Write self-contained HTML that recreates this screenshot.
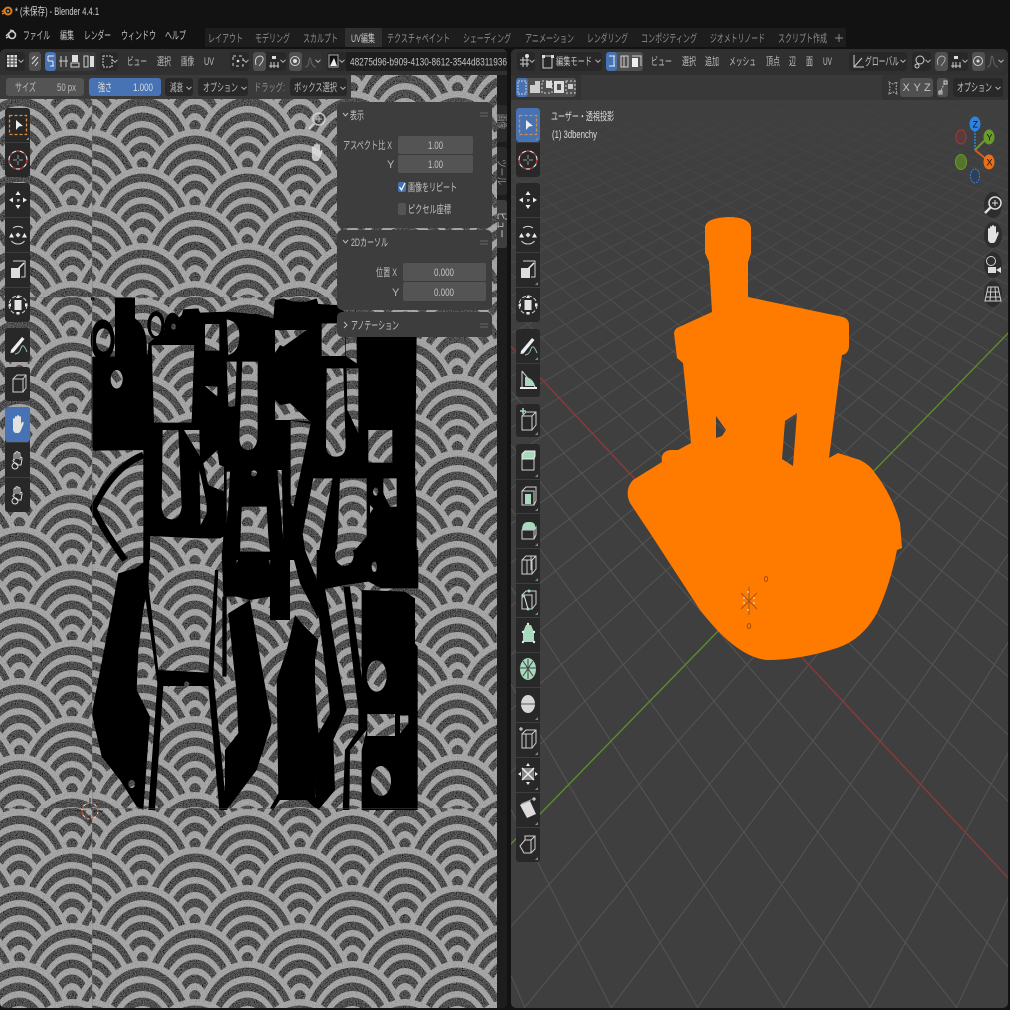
<!DOCTYPE html>
<html><head><meta charset="utf-8"><title>Blender</title>
<style>
html,body{margin:0;padding:0;background:#121212;width:1010px;height:1010px;overflow:hidden}
svg{display:block;overflow:hidden}
text{font-family:"Liberation Sans","Noto Sans CJK JP",sans-serif;font-size:11px;fill:#c4c4c4}
.t{fill:#8c8c8c}
.h{fill:#bcbcbc}
.s{fill:none;stroke:#d0d0d0;stroke-width:1}
</style></head><body>
<svg width="1010" height="1010" viewBox="0 0 1010 1010">
<defs>
<g id="sc">
<ellipse cx="0" cy="78" rx="56" ry="78" fill="#a4a4a4"/>
<ellipse cx="0" cy="78" rx="51" ry="71.500" fill="#505050"/>
<ellipse cx="0" cy="78" rx="45" ry="63" fill="#a4a4a4"/>
<ellipse cx="0" cy="78" rx="40" ry="56.500" fill="#505050"/>
<ellipse cx="0" cy="78" rx="34" ry="48" fill="#a4a4a4"/>
<ellipse cx="0" cy="78" rx="29" ry="41.500" fill="#505050"/>
<ellipse cx="0" cy="78" rx="23" ry="33" fill="#a4a4a4"/>
<ellipse cx="0" cy="78" rx="18" ry="26.500" fill="#505050"/>
<ellipse cx="0" cy="78" rx="12" ry="18" fill="#a4a4a4"/>
<ellipse cx="0" cy="78" rx="7" ry="11" fill="#505050"/>
</g>
<g id="r0"><use href="#sc" x="0"/><use href="#sc" x="105"/></g>
<g id="r1"><use href="#sc" x="-52.5"/><use href="#sc" x="52.5"/><use href="#sc" x="157.5"/></g>
<pattern id="p1" patternUnits="userSpaceOnUse" width="105" height="76" x="90" y="11">
<rect width="105" height="76" fill="#505050"/>
<use href="#r0" y="-152"/><use href="#r1" y="-114"/><use href="#r0" y="-76"/><use href="#r1" y="-38"/><use href="#r0" y="0"/><use href="#r1" y="38"/><use href="#r0" y="76"/>
</pattern>
<pattern id="p2" href="#p1" x="90" y="32"/>
<pattern id="p3" href="#p1" x="90" y="53"/>
<pattern id="q1" href="#p1" x="72" y="11"/>
<pattern id="q2" href="#p1" x="72" y="32"/>
<pattern id="q3" href="#p1" x="72" y="53"/>
<filter id="noise" x="0" y="0" width="1" height="1" filterUnits="objectBoundingBox">
<feTurbulence type="fractalNoise" baseFrequency="0.85" numOctaves="2" seed="4" result="n"/>
<feColorMatrix in="n" type="matrix" values="1 0 0 0 0 1 0 0 0 0 1 0 0 0 0 0 0 0 0 1" result="g"/>
<feComposite in="SourceGraphic" in2="g" operator="arithmetic" k1="0" k2="1" k3="0.3" k4="-0.15"/>
</filter>
<mask id="isl" maskUnits="userSpaceOnUse" x="0" y="0" width="510" height="1010">
<rect width="510" height="1010" fill="#000"/>
<g transform="translate(80,290) scale(.33333)">
<g fill="#fff">
<path d="M35,200 L105,200 L105,22 L165,22 L165,85 Q205,110 200,190 L215,210 L215,400 L205,480 L40,482 L35,470 Z"/>
<ellipse cx="68" cy="150" rx="36" ry="62"/>
<ellipse cx="228" cy="105" rx="26" ry="42"/>
<ellipse cx="278" cy="110" rx="25" ry="42"/>
<ellipse cx="38" cy="26" rx="5" ry="6"/>
<path d="M190,495 Q100,530 40,655 Q70,720 135,810" fill="none" stroke="#fff" stroke-width="20"/>
<path d="M205,160 L305,75 L310,58 L355,55 L360,68 L440,65 L530,72 L580,85 L585,30 L610,25 L640,35 L680,35 L710,25 L715,42 L770,45 L830,100 L1010,140 L1005,560 L1010,650 L1010,810 L190,810 L190,480 Z"/>
</g>
<g fill="#000">
<ellipse cx="70" cy="150" rx="22" ry="35"/>
<ellipse cx="110" cy="268" rx="18" ry="28"/>
<ellipse cx="228" cy="108" rx="16" ry="30"/>
<ellipse cx="281" cy="110" rx="7" ry="9"/>
<path d="M215,165 L343,165 L335,398 L222,398 Z"/>
<path d="M375,102 L418,102 L418,182 L375,182 Z"/>
<path d="M440,88 Q480,95 478,140 Q478,185 445,195 Z"/>
<path d="M487,215 L533,215 L533,440 Q530,480 505,480 Q478,480 478,440 Z"/>
<path d="M585,120 L680,120 L610,170 L600,165 L585,190 Z"/>
<path d="M375,288 L412,290 L412,320 Z"/>
<path d="M440,215 L470,215 L465,350 L445,350 Z"/>
<path d="M585,330 L600,345 L630,340 L690,395 L630,390 L585,390 Z"/>
<path d="M248,420 L295,420 L305,650 Q300,688 275,688 Q248,688 245,650 Z"/>
<path d="M312,420 L358,420 L360,500 Z"/>
<path d="M370,520 L412,480 L418,525 L432,530 L432,605 L385,585 Z"/>
<path d="M358,540 L380,640 L380,670 L362,705 Z"/>
<path d="M210,738 L360,745 L420,745 L430,740 L425,810 L210,810 Z"/>
<path d="M440,545 L450,545 L445,650 L440,700 Z"/>
<path d="M592,540 L605,540 L610,750 Z"/>
<path d="M485,650 L560,650 L565,740 L570,785 L480,785 Z"/>
<ellipse cx="522" cy="550" rx="9" ry="9"/>
<path d="M632,392 L692,402 L640,650 L632,640 Z"/>
<path d="M700,565 L758,565 L712,810 L680,810 L668,730 Z"/>
<path d="M780,565 L860,565 L860,740 L825,780 L820,810 L770,810 Z"/>
<path d="M910,565 L950,565 L950,650 L930,650 L910,610 Z"/>
<ellipse cx="887" cy="605" rx="8" ry="12"/>
<path d="M870,645 L880,655 L870,670 Z"/>
<path d="M725,100 L795,100 L795,198 L725,198 Z"/>
<path d="M797,140 L830,140 L830,220 L797,198 Z"/>
<path d="M740,235 L790,235 L797,470 Q795,500 768,500 Q740,500 738,470 Z"/>
<path d="M800,235 L835,235 L835,430 L802,360 Z"/>
<path d="M865,420 L937,420 L937,518 L865,518 Z"/>
</g>
</g>
<g transform="translate(80,550) scale(.33333)">
<g fill="#fff">
<path d="M115,70 L165,55 L195,35 L205,100 L190,180 L175,300 L170,420 L210,500 L190,780 L170,770 L120,690 L65,620 L35,490 L80,260 Z"/>
<path d="M190,0 L210,0 L205,100 L235,360 L385,368 L405,60 L415,60 L400,375 L440,780 L418,780 L385,408 L250,408 L225,780 L205,780 L232,400 L190,100 Z"/>
<path d="M425,0 L470,0 L470,40 L480,10 L560,10 L570,45 L575,0 L630,0 L630,210 L570,210 L570,140 L510,150 L470,140 L430,140 Z"/>
<path d="M427,140 L440,140 L440,380 L427,380 Z"/>
<path d="M445,190 L510,150 L575,520 L530,660 L440,780 L420,780 L435,720 L435,600 L475,550 L470,430 Z"/>
<path d="M645,195 L665,220 L715,270 L705,330 L705,400 L715,550 L705,740 L720,780 L700,770 L680,750 L600,750 L580,780 L570,775 L595,730 L590,390 L620,300 Z"/>
<path d="M635,0 L675,0 L715,100 L715,205 L660,100 Z"/>
<path d="M715,100 L735,115 L775,350 L800,480 L760,570 L765,720 L715,780 L705,770 L710,560 L750,490 L745,430 L710,150 Z"/>
<path d="M790,110 L810,110 L845,380 L865,490 L860,540 L810,600 L808,780 L788,780 L795,600 L835,540 L835,480 Z"/>
<path d="M845,120 L975,125 L1005,145 L1005,280 L1013,290 L1013,780 L845,780 L845,600 L860,540 L845,400 Z"/>
<path d="M710,0 L1015,0 L1015,115 L905,115 L865,95 L795,105 L730,118 L710,110 Z"/>
</g>
<g fill="#000">
<ellipse cx="155" cy="702" rx="10" ry="12"/>
<ellipse cx="793" cy="15" rx="28" ry="33"/>
<ellipse cx="883" cy="50" rx="8" ry="16"/>
<ellipse cx="890" cy="378" rx="30" ry="47"/>
<path d="M862,492 L945,492 L945,558 L862,558 Z"/>
<path d="M960,495 L985,495 L985,520 L960,550 Z"/>
<ellipse cx="903" cy="693" rx="30" ry="45"/>
<ellipse cx="320" cy="402" rx="8" ry="8"/>
</g>
</g>
</mask>
<linearGradient id="fade" x1="0" x2="0" y1="0" y2="1" gradientUnits="objectBoundingBox">
<stop offset="0" stop-color="#000"/><stop offset=".05" stop-color="#222"/><stop offset=".2" stop-color="#999"/><stop offset=".42" stop-color="#fff"/><stop offset="1" stop-color="#fff"/>
</linearGradient>
<mask id="gm" maskUnits="userSpaceOnUse" x="511" y="75" width="497" height="933"><rect x="511" y="75" width="497" height="933" fill="url(#fade)"/></mask>
<clipPath id="vp"><rect x="511" y="49" width="497" height="959" rx="5"/></clipPath>
<clipPath id="lc"><rect x="0" y="49" width="507" height="959" rx="5"/></clipPath>

<g id="i-sel"><rect x="-8.5" y="-9.5" width="17" height="19" fill="none" stroke="#e08a3c" stroke-width="1.3" stroke-dasharray="3 2"/><path d="M-2,-5 L5,1 L1,1.5 L-2,5 Z" fill="#eee"/></g>
<g id="i-cur"><circle r="9" fill="none" stroke="#e0e0e0" stroke-width="1.2"/><circle r="9" fill="none" stroke="#b03030" stroke-width="1.4" stroke-dasharray="4 4"/><path d="M0,-5V-1M0,1V5M-5,0H-1M1,0H5" stroke="#999" fill="none"/></g>
<g id="i-mov"><path d="M0,-8V8M-8,0H8" stroke="#ddd" stroke-dasharray="3 4" fill="none"/><path d="M0,-9L2.5,-5H-2.5ZM0,9L2.5,5H-2.5ZM-9,0L-5,-2.5V2.5ZM9,0L5,-2.5V2.5Z" fill="#eee"/></g>
<g id="i-rot"><path d="M-5,-7A8.500,8.500 0 0 1 5,-7M6.500,6A8.500,8.500 0 0 1 -6.500,6" class="s"/><path d="M-9,2.500L-6.500,-2L-4,2.500ZM9,2.500L6.500,-2L4,2.500Z" fill="#eee"/><path d="M0,-2.500L2.500,0L0,2.500L-2.500,0Z" fill="#ddd"/></g>
<g id="i-scl"><path d="M-5,-9H7V7H3" class="s"/><rect x="-7" y="-2" width="9" height="10" fill="#ddd"/><path d="M0,-1L6,-7" stroke="#eee" stroke-width="1.5"/></g>
<g id="i-trf"><circle r="9" class="s" stroke-dasharray="4 2"/><rect x="-3.500" y="-5" width="7" height="10" fill="#e2e2e2"/><path d="M0,-10L2,-7H-2ZM0,10L2,7H-2ZM-10,0L-7,-2V2ZM10,0L7,-2V2Z" fill="#eee"/></g>
<g id="i-ann"><path d="M-7,5L4,-8L6.500,-6L-4.500,7.500L-7.500,8Z" fill="#eee"/><path d="M-3,9Q1,9 3,3T9,7" fill="none" stroke="#8fc9a8"/></g>
<g id="i-msr"><path d="M-6,-9V8H8L-6,-9" class="s" stroke-width="1.5"/><path d="M-3,-3A11,11 0 0 1 7,6H-3Z" fill="#a6d9bd"/><path d="M-8,8H9" stroke="#eee" stroke-width="2"/></g>
<g id="i-box"><path d="M-5,-5H5V8H-5ZM-5,-5L-1,-9H8V4L5,8M5,-5L8,-9" class="s"/></g>
<g id="i-box2"><path d="M-6,-5H4V9H-6ZM-6,-5L-2,-9H8V4L4,9M4,-5L8,-9" class="s"/><path d="M-8,-10H-2M-5,-13V-7" stroke="#a6d9bd" stroke-width="1.5"/></g>
<g id="i-ext"><path d="M-6,-2H6V9H-6Z" class="s"/><path d="M-6,-2V-7L-3,-10H7V-5L6,-2Z" fill="#a6d9bd" stroke="#eee"/></g>
<g id="i-ins"><path d="M-6,-5H6V9H-6ZM-6,-5L-2,-9H8V5L6,9" class="s"/><path d="M-3,-2H3V8H-3Z" fill="#a6d9bd"/></g>
<g id="i-bev"><path d="M-6,0H6V9H-6ZM6,0L8,-3V5L6,9" class="s"/><path d="M-6,0Q-6,-8 0,-8H3Q8,-7 7,-2L6,0Z" fill="#a6d9bd"/></g>
<g id="i-loop"><path d="M-6,-5H4V9H-6ZM-6,-5L-2,-9H8V4L4,9M4,-5L8,-9" class="s"/><path d="M-1,-5V9M3,-9V5" stroke="#ccc"/></g>
<g id="i-knf"><path d="M-6,-5H4V9H-6ZM-6,-5L-2,-9H8V4L4,9" class="s"/><path d="M-4,-5L0,9" stroke="#eee"/><circle cx="1" cy="-9" r="1.500" fill="#a6d9bd"/><circle cx="-5" cy="-4" r="1.500" fill="#a6d9bd"/><circle cx="0" cy="9" r="1.500" fill="#a6d9bd"/></g>
<g id="i-poly"><path d="M-5,8L-5,-2L-2,-9H3L6,-2L6,8Z" fill="#a6d9bd"/><g fill="#eee"><circle cx="-5" cy="8" r="1.200"/><circle cx="6" cy="8" r="1.200"/><circle cx="-5" cy="-2" r="1.200"/><circle cx="6" cy="-2" r="1.200"/><circle cx="0" cy="-10" r="1.200"/></g></g>
<g id="i-spin"><ellipse rx="8" ry="11" fill="#a6d9bd"/><path d="M-9,-1H8M0,-10V10M-5,-8L5,7M5,-8L-5,7" stroke="#444" /></g>
<g id="i-smo"><ellipse rx="7" ry="9" fill="#d6d6d6"/><path d="M-7,0H7" stroke="#555"/></g>
<g id="i-sld"><path d="M-6,-5H4V9H-6ZM-6,-5L-2,-9H8V4L4,9M4,-5L8,-9M-2,-5V9" class="s"/><path d="M-9,-10H-5M-7,-12V-8" stroke="#eee"/></g>
<g id="i-shr"><rect x="-6" y="-6" width="12" height="12" fill="#888"/><path d="M-6,-6L6,6M6,-6L-6,6" stroke="#eee" stroke-width="1.500"/><path d="M0,-11L2,-8H-2ZM0,11L2,8H-2ZM-10,0L-7,-2V2ZM10,0L7,-2V2Z" fill="#eee"/></g>
<g id="i-shear"><path d="M-8,-4L2,-8L8,5L-1,9Z" fill="#dcdcdc"/><path d="M-8,-4L-6,-6L4,-10L2,-8Z" fill="#aaa"/><path d="M6,-12V-8M4,-10H8" stroke="#eee"/></g>
<g id="i-rip"><path d="M-8,2L-3,-4V-8H7V5L3,9H-4ZM-3,-4H3V9M3,-4L7,-8" class="s"/></g>
<g id="i-cube"><path d="M-7,-1L-1,-8H8V5L3,9H-5L-7,-1ZM-1,-3H8M3,-3V9" class="s"/></g>
<g id="i-hand"><path d="M-5,-1V-6Q-4,-8 -3,-6V-3V-8Q-2,-10 -1,-8V-3V-9Q0,-11 1,-9V-3V-8Q2,-10 3,-8V-1L4,-3Q6,-4 5.500,-1L3,5Q2,8 0,8H-2Q-4,8 -5,5Z" fill="#e2e2e2"/></g>
<g id="i-hand2"><path d="M-4,0V-6Q-3,-8 -2,-6V-1M-2,-3V-8Q0,-9 0,-7V-1M0,-3V-7Q2,-8 2,-6V0M2,-2Q4,-4 4,-1L3,5H-1L-5,1Q-5,-1 -3,0" fill="none" stroke="#ddd"/><circle cx="-3" cy="6" r="3" fill="none" stroke="#ddd"/></g>
<g id="i-zoom"><circle cx="2" cy="-2" r="6" fill="none" stroke="#ddd" stroke-width="1.500"/><path d="M-2,2L-8,8" stroke="#ddd" stroke-width="2.500"/><path d="M2,-5V1M-1,-2H5" stroke="#ddd"/></g>
<g id="i-cam"><circle cx="-2" cy="-4" r="4.500" class="s" stroke-width="1.500"/><rect x="-5" y="2" width="8" height="6" fill="#ddd"/><path d="M3,5L8,2V8Z" fill="#ddd"/></g>
<g id="i-grid"><path d="M-5,-7H5L8,7H-8ZM-6.500,-2H6.500M-7.500,3H7.500M-2,-7L-3,7M2,-7L3,7" class="s"/></g>
<path id="chev" d="M-2.500,-1.200L0,1.300L2.500,-1.200" fill="none" stroke="#bbb" stroke-width="1"/>
<path id="corner" d="M0,3H3V0Z" fill="#888"/>
</defs>

<rect width="1010" height="1010" fill="#121212"/>
<!-- title -->
<g transform="translate(7,11)"><circle cx="1" cy="0" r="3.500" fill="none" stroke="#e87d0d" stroke-width="2"/><path d="M-5,1L-1,-3M-5,3L-1,1" stroke="#e87d0d" stroke-width="1.500"/><circle cx="1" cy="0" r="1.300" fill="#5a95d0"/></g>
<text x="15" y="15" textLength="84" lengthAdjust="spacingAndGlyphs" style="fill:#d0d0d0">* (未保存) - Blender 4.4.1</text>
<!-- menu -->
<g transform="translate(11,35)"><circle cx="1" cy="0" r="3.500" fill="none" stroke="#ccc" stroke-width="1.600"/><path d="M-5,1L-1,-3M-5,3L-1,1M-1,-5L3,-4" stroke="#ccc" stroke-width="1.300"/></g>
<text x="23" y="39" textLength="27" lengthAdjust="spacingAndGlyphs">ファイル</text>
<text x="60" y="39" textLength="14" lengthAdjust="spacingAndGlyphs">編集</text>
<text x="84" y="39" textLength="27" lengthAdjust="spacingAndGlyphs">レンダー</text>
<text x="121" y="39" textLength="35" lengthAdjust="spacingAndGlyphs">ウィンドウ</text>
<text x="165" y="39" textLength="21" lengthAdjust="spacingAndGlyphs">ヘルプ</text>
<!-- tabs -->
<path d="M205,47V30Q205,28 207,28H843Q846,28 846,31V47Z" fill="#1d1d1d"/>
<path d="M345,47V30Q345,28 347,28H380Q382,28 382,30V47Z" fill="#303030"/>
<g>
<text class="t" x="208" y="42" textLength="35" lengthAdjust="spacingAndGlyphs">レイアウト</text>
<text class="t" x="255" y="42" textLength="35" lengthAdjust="spacingAndGlyphs">モデリング</text>
<text class="t" x="303" y="42" textLength="35" lengthAdjust="spacingAndGlyphs">スカルプト</text>
<text x="351" y="42" textLength="24" lengthAdjust="spacingAndGlyphs">UV編集</text>
<text class="t" x="387" y="42" textLength="63" lengthAdjust="spacingAndGlyphs">テクスチャペイント</text>
<text class="t" x="463" y="42" textLength="48" lengthAdjust="spacingAndGlyphs">シェーディング</text>
<text class="t" x="525" y="42" textLength="49" lengthAdjust="spacingAndGlyphs">アニメーション</text>
<text class="t" x="587" y="42" textLength="41" lengthAdjust="spacingAndGlyphs">レンダリング</text>
<text class="t" x="641" y="42" textLength="56" lengthAdjust="spacingAndGlyphs">コンポジティング</text>
<text class="t" x="710" y="42" textLength="55" lengthAdjust="spacingAndGlyphs">ジオメトリノード</text>
<text class="t" x="778" y="42" textLength="49" lengthAdjust="spacingAndGlyphs">スクリプト作成</text>
<path d="M835,38H843M839,34V42" stroke="#8c8c8c"/>
</g>

<!-- left editor -->
<g clip-path="url(#lc)">
<rect x="0" y="49" width="507" height="959" fill="#1d1d1d"/>
<g filter="url(#noise)">
<rect x="92" y="75" width="405" height="222" fill="url(#p3)"/>
<rect x="92" y="297" width="405" height="511" fill="url(#p2)"/>
<rect x="92" y="808" width="405" height="200" fill="url(#p1)"/>
<rect x="0" y="75" width="92" height="222" fill="url(#q3)"/>
<rect x="0" y="297" width="92" height="511" fill="url(#q2)"/>
<rect x="0" y="808" width="92" height="200" fill="url(#q1)"/>
</g>
<rect x="0" y="49" width="510" height="959" fill="#000" mask="url(#isl)"/>
<path d="M0,297.500H497M0,808.500H497M92.500,75V1008" stroke="#777" stroke-opacity=".3" fill="none"/>
<rect x="497" y="99" width="10" height="909" fill="#1d1d1d"/>
<!-- 2d cursor -->
<g transform="translate(90,811)"><circle r="8" fill="none" stroke="#ddd" stroke-dasharray="3 3"/><circle r="8" fill="none" stroke="#c8602a" stroke-dasharray="3 3" stroke-dashoffset="3"/><path d="M-13,0H-4M4,0H13M0,-13V-4M0,4V13" stroke="#222"/></g>
<!-- header -->
<rect x="0" y="49" width="507" height="26" fill="#303030"/>
<rect x="5" y="52" width="20" height="19" rx="3" fill="#282828"/>
<g transform="translate(12,61)"><rect x="-5" y="-6" width="10" height="12" fill="#ddd"/><path d="M-5,-3H5M-5,0H5M-5,3H5M-2,-6V6M2,-6V6" stroke="#444"/></g>
<use href="#chev" x="21" y="61"/>
<rect x="29" y="52" width="12" height="19" rx="3" fill="#505050"/>
<path d="M32,64L38,57M32,59L35,56M38,62L35,66" stroke="#ddd" fill="none"/>
<rect x="45" y="52" width="51" height="19" rx="3" fill="#3a3a3a"/>
<rect x="45" y="52" width="11" height="19" rx="3" fill="#4772b3"/>
<path d="M48,56H54M48,61H53M50,66H54M48,56V61M53,61V66" stroke="#eee" fill="none"/>
<path d="M61,56V67M66,56V67M59,61H68" stroke="#ccc" fill="none"/><rect x="72" y="55" width="6" height="7" fill="#ddd"/><path d="M71,63H79V67H71Z" class="s"/><rect x="84" y="56" width="4" height="11" class="s"/><rect x="90" y="56" width="4" height="11" fill="#ddd"/>
<rect x="100" y="52" width="18" height="19" rx="3" fill="#282828"/><rect x="103" y="56" width="9" height="11" class="s" stroke-dasharray="2 1"/><use href="#chev" x="115" y="61"/>
<text class="h" x="127" y="65" textLength="20" lengthAdjust="spacingAndGlyphs">ビュー</text>
<text class="h" x="157" y="65" textLength="14" lengthAdjust="spacingAndGlyphs">選択</text>
<text class="h" x="181" y="65" textLength="13" lengthAdjust="spacingAndGlyphs">画像</text>
<text class="h" x="204" y="65" textLength="10" lengthAdjust="spacingAndGlyphs">UV</text>
<rect x="230" y="52" width="19" height="19" rx="3" fill="#282828"/><rect x="233" y="56" width="10" height="10" class="s" stroke-dasharray="3 3"/><circle cx="238" cy="61" r="1.300" fill="#ddd"/><use href="#chev" x="246" y="61"/>
<rect x="253" y="52" width="33" height="19" rx="3" fill="#282828"/><rect x="253" y="52" width="13" height="19" rx="3" fill="#505050"/><path d="M256,65Q254,57 260,56Q265,57 262,62L259,66" class="s"/><path d="M269,66H279M271,62V68M274,62V68M278,62V68" stroke="#ccc" fill="none"/><rect x="272" y="56" width="4" height="3" fill="#ddd"/><use href="#chev" x="283" y="61"/>
<rect x="289" y="52" width="33" height="19" rx="3" fill="#333"/><rect x="289" y="52" width="13" height="19" rx="3" fill="#505050"/><circle cx="295" cy="61" r="4.500" class="s"/><circle cx="295" cy="61" r="2" fill="#ddd"/><path d="M305,67Q309,67 309,60Q310,56 311,60Q312,67 316,67" fill="none" stroke="#666"/><use href="#chev" x="318" y="61"/>
<rect x="327" y="52" width="19" height="19" rx="3" fill="#282828"/><path d="M329,55H338V67H329Z" fill="#111" stroke="#aaa"/><path d="M330,66L334,58L337,66Z" fill="#eee"/><use href="#chev" x="342" y="61"/>
<rect x="346" y="52" width="161" height="19" fill="#1e1e1e"/>
<text x="350" y="65.500" textLength="157" lengthAdjust="spacingAndGlyphs">48275d96-b909-4130-8612-3544d8311936</text>
<!-- tool settings -->
<rect x="0" y="75" width="351" height="24" fill="#3a3a3a"/>
<rect x="6" y="78" width="78" height="18" rx="3" fill="#545454"/>
<text class="h" x="15" y="91" textLength="21" lengthAdjust="spacingAndGlyphs">サイズ</text>
<text class="h" x="57" y="91" textLength="19" lengthAdjust="spacingAndGlyphs">50 px</text>
<rect x="89" y="78" width="72" height="18" rx="3" fill="#4772b3"/>
<text x="98" y="91" textLength="14" lengthAdjust="spacingAndGlyphs" style="fill:#ddd">強さ</text>
<text x="133" y="91" textLength="20" lengthAdjust="spacingAndGlyphs" style="fill:#ddd">1.000</text>
<rect x="165" y="78" width="28" height="18" rx="3" fill="#282828"/>
<text class="h" x="170" y="91" textLength="13" lengthAdjust="spacingAndGlyphs">減衰</text><use href="#chev" x="189" y="88"/>
<rect x="198" y="78" width="50" height="18" rx="3" fill="#282828"/>
<text class="h" x="203" y="91" textLength="35" lengthAdjust="spacingAndGlyphs">オプション</text><use href="#chev" x="244" y="88"/>
<text class="t" x="254" y="91" textLength="31" lengthAdjust="spacingAndGlyphs">ドラッグ:</text>
<rect x="290" y="78" width="57" height="18" rx="3" fill="#282828"/>
<text class="h" x="294" y="91" textLength="43" lengthAdjust="spacingAndGlyphs">ボックス選択</text><use href="#chev" x="343" y="88"/>
<!-- left toolbar -->
<g fill="#282828">
<rect x="5" y="108" width="25" height="69" rx="3"/>
<rect x="5" y="183" width="25" height="139" rx="3"/>
<rect x="5" y="328" width="25" height="34" rx="3"/>
<rect x="5" y="367" width="25" height="34" rx="3"/>
<rect x="5" y="407" width="25" height="105" rx="3"/>
</g>
<rect x="5" y="407" width="25" height="35" rx="3" fill="#4772b3"/>
<path d="M5,142.500H30M5,217.500H30M5,252.500H30M5,287.500H30M5,442.500H30M5,477.500H30" stroke="#3e3e3e"/>
<use href="#i-sel" x="18" y="125"/><use href="#i-cur" x="18" y="160"/>
<use href="#i-mov" x="18" y="200"/><use href="#i-rot" x="18" y="235"/><use href="#i-scl" x="18" y="270"/><use href="#i-trf" x="18" y="305"/>
<use href="#i-ann" x="18" y="345"/><use href="#i-box" x="18" y="384"/>
<use href="#i-hand" x="18" y="425"/><use href="#i-hand2" x="18" y="460"/><use href="#i-hand2" x="18" y="495"/>
<use href="#corner" x="26" y="137"/>
<use href="#i-zoom" x="317" y="121" opacity=".8"/><use href="#i-hand" x="317" y="153" opacity=".8"/>
<!-- panels -->
<rect x="337" y="102" width="155" height="126" rx="5" fill="#3d3d3d"/>
<rect x="337" y="230" width="155" height="80" rx="5" fill="#3d3d3d"/>
<rect x="337" y="312" width="155" height="25" rx="5" fill="#3d3d3d"/>
<path d="M343,113L345.500,116L348,113" fill="none" stroke="#bbb"/><text x="350" y="119" textLength="14" lengthAdjust="spacingAndGlyphs">表示</text>
<path d="M480,113H488M480,116H488" stroke="#666"/>
<text class="h" x="343" y="149" textLength="49" lengthAdjust="spacingAndGlyphs">アスペクト比 X</text>
<rect x="398" y="136" width="75" height="18" rx="2" fill="#545454"/><rect x="398" y="155" width="75" height="18" rx="2" fill="#545454"/>
<text x="428" y="149" textLength="15" lengthAdjust="spacingAndGlyphs">1.00</text><text x="428" y="168" textLength="15" lengthAdjust="spacingAndGlyphs">1.00</text>
<text class="h" x="387" y="168">Y</text>
<rect x="398" y="182" width="8" height="10" rx="2" fill="#4772b3"/><path d="M399.500,187L401.500,190L405,183" stroke="#fff" stroke-width="1.200" fill="none"/>
<text x="408" y="191" textLength="49" lengthAdjust="spacingAndGlyphs">画像をリピート</text>
<rect x="398" y="203" width="8" height="12" rx="2" fill="#545454"/>
<text x="408" y="213" textLength="43" lengthAdjust="spacingAndGlyphs">ピクセル座標</text>
<path d="M343,240L345.500,243L348,240" fill="none" stroke="#bbb"/><text x="351" y="246" textLength="37" lengthAdjust="spacingAndGlyphs">2Dカーソル</text>
<path d="M480,241H488M480,244H488" stroke="#666"/>
<text class="h" x="376" y="276" textLength="21" lengthAdjust="spacingAndGlyphs">位置 X</text><text class="h" x="392" y="296">Y</text>
<rect x="403" y="263" width="83" height="18" rx="2" fill="#545454"/><rect x="403" y="282" width="83" height="19" rx="2" fill="#545454"/>
<text x="434" y="276" textLength="20" lengthAdjust="spacingAndGlyphs">0.000</text><text x="434" y="296" textLength="20" lengthAdjust="spacingAndGlyphs">0.000</text>
<path d="M344,322L347,325L344,328" fill="none" stroke="#bbb"/><text x="351" y="329" textLength="48" lengthAdjust="spacingAndGlyphs">アノテーション</text>
<path d="M480,324H488M480,327H488" stroke="#666"/>
<!-- side tabs -->
<path d="M497,105H504Q507,105 507,108V139Q507,142 504,142H497Z" fill="#2a2a2a"/>
<path d="M497,147H504Q507,147 507,150V192Q507,195 504,195H497Z" fill="#2a2a2a"/>
<path d="M497,200H504Q507,200 507,203V245Q507,248 504,248H497Z" fill="#3d3d3d"/>
<text class="t" transform="translate(498,114) rotate(90)" textLength="15" lengthAdjust="spacingAndGlyphs">画像</text>
<text class="t" transform="translate(498,159) rotate(90)" textLength="26" lengthAdjust="spacingAndGlyphs">ツール</text>
<text transform="translate(498,212) rotate(90)" textLength="26" lengthAdjust="spacingAndGlyphs">ビュー</text>
</g>

<!-- right editor -->
<g clip-path="url(#vp)">
<rect x="511" y="49" width="497" height="959" fill="#3f3f3f"/>
<g mask="url(#gm)" stroke="#555555" stroke-width="1" fill="none">
<path d="M1525,-200L1042.8,1008M1525,-200L956.3,1008M1525,-200L869.9,1008M1525,-200L783.5,1008M1525,-200L697.1,1008M1525,-200L610.7,1008M1525,-200L524.2,1008M1525,-200L437.8,1008M1525,-200L265,1008M1525,-200L178.6,1008M1525,-200L92.1,1008M1525,-200L5.7,1008M1525,-200L-80.7,1008M1525,-200L-167.1,1008M1525,-200L-253.5,1008M1525,-200L-340,1008M1525,-200L-426.4,1008M1525,-200L-512.8,1008M1525,-200L-599.2,1008M1525,-200L-685.6,1008M1525,-200L-772,1008M1525,-200L-858.5,1008M1525,-200L-944.9,1008M1525,-200L-1031.3,1008M1525,-200L-1117.7,1008M1525,-200L-1204.1,1008M1525,-200L-1290.6,1008M1525,-200L-1377,1008M1525,-200L-1463.4,1008M1525,-200L-1549.8,1008M1525,-200L-1636.2,1008M1525,-200L-1722.7,1008M1525,-200L-1809,1008M1525,-200L-1895.5,1008M1525,-200L-1981.9,1008M1525,-200L-2068.4,1008M1525,-200L-2154.8,1008"/>
<path d="M0,-200L438.6,1008M0,-200L525,1008M0,-200L611.5,1008M0,-200L697.9,1008M0,-200L784.3,1008M0,-200L870.7,1008M0,-200L957.2,1008M0,-200L1043.6,1008M0,-200L1216.4,1008M0,-200L1302.8,1008M0,-200L1389.3,1008M0,-200L1475.7,1008M0,-200L1562.1,1008M0,-200L1648.5,1008M0,-200L1735,1008M0,-200L1821.4,1008M0,-200L1907.8,1008M0,-200L1994.2,1008M0,-200L2080.6,1008M0,-200L2167,1008M0,-200L2253.5,1008M0,-200L2339.9,1008M0,-200L2426.3,1008M0,-200L2512.7,1008M0,-200L2599.1,1008M0,-200L2685.6,1008M0,-200L2772,1008M0,-200L2858.4,1008M0,-200L2944.8,1008M0,-200L3031.2,1008M0,-200L3117.7,1008M0,-200L3204,1008M0,-200L3290.5,1008M0,-200L3376.9,1008M0,-200L3463.3,1008M0,-200L3549.8,1008M0,-200L3636.2,1008M0,-200L3722.6,1008"/>
</g>
<path d="M505,340L1010,880" stroke="#8b3a3a" stroke-width="1.400" fill="none"/>
<path d="M505,850L1015,326" stroke="#5f8a2c" stroke-width="1.400" fill="none"/>
<!-- boat -->
<path fill="#ff7b00" fill-rule="evenodd" d="M705,227 Q706,218 728,217 Q749,217 751,227 L751,253 L748,262 L748,297 L843,317 Q849,319 849,325 L849,347 Q848,354 842,355 L829,458 L838,453 L860,460 Q870,465 875,473 Q892,495 900,523 L902,548 L897,550 Q890,585 877,613 Q862,640 837,648 Q800,660 767,660 Q745,658 720,633 Q708,620 700,610 L650,533 L630,503 Q624,490 633,480 L662,462 Q660,452 670,450 L678,450 L691,443 L683,363 L677,358 L674,333 Q675,328 679,327 L712,312 L709,262 L705,253 Z M716,416 L726,430 L722,436 L716,438 Z M785,421 L797,413 L793,466 L782,459 Z"/>
<g fill="none"><ellipse cx="766" cy="579" rx="1.700" ry="2.500" stroke="#a04a10"/><ellipse cx="749" cy="626" rx="1.700" ry="2.500" stroke="#a04a10"/>
<path d="M749,587V615M741,593L757,609M757,593L741,609" stroke="#a0561a"/><path d="M744,597V604M754,597V604M747,592H752M747,610H752" stroke="#eee" stroke-dasharray="2 3"/></g>
<!-- header -->
<rect x="511" y="49" width="497" height="26" fill="#303030"/>
<rect x="511" y="75" width="497" height="25" fill="#393939"/>
<rect x="511" y="75" width="70" height="25" fill="#333"/>
<rect x="882" y="75" width="126" height="25" rx="3" fill="#333"/>
<rect x="517" y="52" width="18" height="19" rx="3" fill="#282828"/><path d="M520,60H529M520,64H529M523,57V67M527,57V67" stroke="#ccc" fill="none"/><circle cx="527" cy="56" r="2" fill="#ddd"/><use href="#chev" x="532" y="61"/>
<rect x="540" y="52" width="62" height="19" rx="3" fill="#282828"/><path d="M543,56H552V68H543Z" class="s"/><rect x="542" y="55" width="3" height="3" fill="#ddd"/><rect x="551" y="55" width="3" height="3" fill="#ddd"/>
<text x="556" y="65" textLength="36" lengthAdjust="spacingAndGlyphs">編集モード</text><use href="#chev" x="598" y="61"/>
<rect x="606" y="52" width="37" height="19" rx="3" fill="#505050"/><rect x="606" y="52" width="11" height="19" rx="3" fill="#4772b3"/>
<path d="M609,56H615M609,66H615M614,56V66" stroke="#eee" fill="none"/><path d="M621,56H628V67H621ZM624,56V67" class="s"/><rect x="632" y="58" width="6" height="9" fill="#eee"/><path d="M632,56H641V66" class="s"/>
<text class="h" x="651" y="65" textLength="21" lengthAdjust="spacingAndGlyphs">ビュー</text>
<text class="h" x="682" y="65" textLength="14" lengthAdjust="spacingAndGlyphs">選択</text>
<text class="h" x="705" y="65" textLength="14" lengthAdjust="spacingAndGlyphs">追加</text>
<text class="h" x="729" y="65" textLength="27" lengthAdjust="spacingAndGlyphs">メッシュ</text>
<text class="h" x="766" y="65" textLength="14" lengthAdjust="spacingAndGlyphs">頂点</text>
<text class="h" x="789" y="65" textLength="7" lengthAdjust="spacingAndGlyphs">辺</text>
<text class="h" x="806" y="65" textLength="7" lengthAdjust="spacingAndGlyphs">面</text>
<text class="h" x="823" y="65" textLength="9" lengthAdjust="spacingAndGlyphs">UV</text>
<rect x="849" y="52" width="58" height="19" rx="3" fill="#282828"/><path d="M854,55V67H864M854,67L862,58" stroke="#ccc" fill="none"/>
<text x="865" y="65" textLength="34" lengthAdjust="spacingAndGlyphs">グローバル</text><use href="#chev" x="903" y="61"/>
<rect x="912" y="52" width="19" height="19" rx="3" fill="#282828"/><circle cx="920" cy="60" r="4" class="s"/><circle cx="917" cy="66" r="2" class="s"/><use href="#chev" x="928" y="61"/>
<rect x="935" y="52" width="33" height="19" rx="3" fill="#282828"/><rect x="935" y="52" width="13" height="19" rx="3" fill="#505050"/><path d="M938,65Q936,57 942,56Q947,57 944,62L941,66" fill="none" stroke="#aaa"/><path d="M951,66H961M953,62V68M956,62V68M960,62V68" stroke="#ccc" fill="none"/><rect x="954" y="56" width="4" height="3" fill="#ddd"/><use href="#chev" x="965" y="61"/>
<rect x="972" y="52" width="33" height="19" rx="3" fill="#333"/><rect x="972" y="52" width="13" height="19" rx="3" fill="#505050"/><circle cx="978" cy="61" r="4.500" class="s"/><circle cx="978" cy="61" r="1.500" fill="#ddd"/><path d="M987,67Q991,67 991,58Q992,54 993,58Q994,67 998,67" fill="none" stroke="#666"/><use href="#chev" x="1001" y="61"/>
<!-- row 2 -->
<rect x="516" y="78" width="60" height="19" rx="3" fill="#505050"/><rect x="516" y="78" width="12" height="19" rx="3" fill="#4772b3"/>
<rect x="518" y="81" width="8" height="13" class="s" stroke-dasharray="2 1"/>
<path d="M530,93V85H535V81H540V93Z" fill="#ccc"/><path d="M542,93V81H552V93Z" class="s" stroke-dasharray="2 2"/><path d="M546,81H552V88H546Z" fill="#ddd"/><path d="M554,81H564V93H554Z" fill="#ddd"/><rect x="557" y="84" width="4" height="6" fill="#505050"/><rect x="566" y="81" width="9" height="12" class="s" stroke-dasharray="2 2"/><rect x="568" y="84" width="5" height="5" fill="#ccc"/>
<path d="M889,82L893,84L897,82L896,88L897,94L893,92L889,94L890,88Z" fill="none" stroke="#aaa" stroke-dasharray="2 1"/>
<rect x="900" y="78" width="33" height="19" rx="3" fill="#505050"/>
<text x="902.500" y="91">X</text><text x="913.500" y="91">Y</text><text x="924" y="91">Z</text>
<rect x="937" y="78" width="11" height="19" rx="3" fill="#505050"/><path d="M940,93L945,82" stroke="#bbb" stroke-dasharray="2 1"/><rect x="939" y="91" width="3" height="3" fill="none" stroke="#ccc"/><rect x="944" y="81" width="3" height="3" fill="none" stroke="#ccc"/>
<rect x="953" y="78" width="50" height="19" rx="3" fill="#282828"/>
<text x="957" y="91" textLength="35" lengthAdjust="spacingAndGlyphs">オプション</text><use href="#chev" x="998" y="88"/>
<!-- toolbar -->
<g fill="#282828">
<rect x="516" y="108" width="24" height="69" rx="3"/>
<rect x="516" y="183" width="24" height="139" rx="3"/>
<rect x="516" y="329" width="24" height="68" rx="3"/>
<rect x="516" y="404" width="24" height="33" rx="3"/>
<rect x="516" y="444" width="24" height="418" rx="3"/>
</g>
<rect x="516" y="108" width="24" height="34" rx="3" fill="#4772b3"/>
<path d="M516,142.500H540M516,217.500H540M516,252.500H540M516,287.500H540M516,363.500H540M516,479.500H540M516,513.500H540M516,548.500H540M516,583.500H540M516,617.500H540M516,652.500H540M516,687.500H540M516,722.500H540M516,757.500H540M516,792.500H540M516,827.500H540" stroke="#3e3e3e"/>
<use href="#i-sel" x="528" y="125"/><use href="#i-cur" x="528" y="160"/>
<use href="#i-mov" x="528" y="200"/><use href="#i-rot" x="528" y="235"/><use href="#i-scl" x="528" y="270"/><use href="#i-trf" x="528" y="305"/>
<use href="#i-ann" x="528" y="346"/><use href="#i-msr" x="528" y="380"/>
<use href="#i-box2" x="528" y="421"/><use href="#i-ext" x="528" y="461"/><use href="#i-ins" x="528" y="496"/><use href="#i-bev" x="528" y="530"/><use href="#i-loop" x="528" y="565"/><use href="#i-knf" x="528" y="600"/><use href="#i-poly" x="528" y="634"/><use href="#i-spin" x="528" y="669"/><use href="#i-smo" x="528" y="704"/><use href="#i-sld" x="528" y="739"/><use href="#i-shr" x="528" y="774"/><use href="#i-shear" x="528" y="809"/><use href="#i-rip" x="528" y="844"/>
<use href="#corner" x="535" y="137"/><use href="#corner" x="535" y="282"/><use href="#corner" x="535" y="357"/><use href="#corner" x="535" y="432"/><use href="#corner" x="535" y="474"/><use href="#corner" x="535" y="508"/><use href="#corner" x="535" y="543"/><use href="#corner" x="535" y="578"/><use href="#corner" x="535" y="612"/><use href="#corner" x="535" y="717"/><use href="#corner" x="535" y="752"/><use href="#corner" x="535" y="787"/><use href="#corner" x="535" y="822"/><use href="#corner" x="535" y="857"/>
<text x="551" y="120" textLength="63" lengthAdjust="spacingAndGlyphs" style="fill:#ddd">ユーザー・透視投影</text>
<text x="552" y="138" textLength="45" lengthAdjust="spacingAndGlyphs" style="fill:#ddd">(1) 3dbenchy</text>
<!-- gizmo -->
<path d="M975,150V130" stroke="#2f83e0" stroke-dasharray="2 1" stroke-width="1.500"/><path d="M975,150L985,140" stroke="#6a9a2a" stroke-width="2"/><path d="M975,150L986,159" stroke="#d85a1a" stroke-width="2"/>
<ellipse cx="961" cy="137" rx="5" ry="7" fill="#5a3a3a" stroke="#94393f" stroke-width="1.200"/>
<ellipse cx="961" cy="162" rx="5.500" ry="7.500" fill="#55752c" stroke="#6a9a2a"/>
<ellipse cx="975" cy="176" rx="4.500" ry="7" fill="#2f3f55" stroke="#2f83e0" stroke-dasharray="2 1"/>
<ellipse cx="975" cy="124" rx="5.500" ry="7.500" fill="#2f83e0"/><text x="972.500" y="127.500" style="fill:#111;font-size:9px">Z</text>
<ellipse cx="989" cy="137" rx="5.500" ry="7.500" fill="#6a9a2a"/><text x="986.500" y="140.500" style="fill:#111;font-size:9px">Y</text>
<ellipse cx="989" cy="162" rx="5.500" ry="7.500" fill="#e8701a"/><text x="986.500" y="165.500" style="fill:#111;font-size:9px">X</text>
<!-- nav -->
<g fill="#2b2b2b" opacity=".85"><ellipse cx="993" cy="205" rx="9" ry="13"/><ellipse cx="993" cy="235" rx="9" ry="13"/><ellipse cx="993" cy="265" rx="9" ry="13"/><ellipse cx="993" cy="294" rx="9" ry="13"/></g>
<use href="#i-zoom" x="993" y="205"/><use href="#i-hand" x="993" y="235"/><use href="#i-cam" x="993" y="265"/><use href="#i-grid" x="993" y="294"/>
</g>
</svg>
</body></html>
